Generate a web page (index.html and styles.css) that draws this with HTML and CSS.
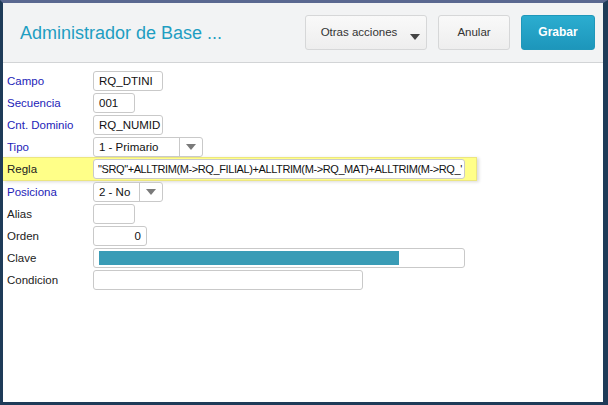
FILE: index.html
```html
<!DOCTYPE html>
<html lang="es">
<head>
    <meta charset="UTF-8">
    <meta name="viewport" content="width=device-width, initial-scale=1.0">
    <title>Administrador de Base</title>
    <link rel="stylesheet" href="styles.css">
</head>
<body>
    <div class="window">
        <header class="toolbar">
            <h1>Administrador de Base ...</h1>
            <div class="actions">
                <button class="btn btn-more">Otras acciones<span class="caret"></span></button>
                <button class="btn btn-cancel">Anular</button>
                <button class="btn btn-save">Grabar</button>
            </div>
        </header>
        <main class="form">
            <div class="row">
                <label class="req">Campo</label>
                <div class="field w70">RQ_DTINI</div>
            </div>
            <div class="row">
                <label class="req">Secuencia</label>
                <div class="field w42">001</div>
            </div>
            <div class="row">
                <label class="req">Cnt. Dominio</label>
                <div class="field w70">RQ_NUMID</div>
            </div>
            <div class="row">
                <label class="req">Tipo</label>
                <div class="select w110"><span class="value">1 - Primario</span><span class="arrow"></span></div>
            </div>
            <div class="row row-focus">
                <label>Regla</label>
                <div class="field w372 tight">"SRQ"+ALLTRIM(M-&gt;RQ_FILIAL)+ALLTRIM(M-&gt;RQ_MAT)+ALLTRIM(M-&gt;RQ_'</div>
            </div>
            <div class="row">
                <label class="req">Posiciona</label>
                <div class="select w70"><span class="value">2 - No</span><span class="arrow"></span></div>
            </div>
            <div class="row">
                <label>Alias</label>
                <div class="field w42"></div>
            </div>
            <div class="row">
                <label>Orden</label>
                <div class="field w54 num">0</div>
            </div>
            <div class="row">
                <label>Clave</label>
                <div class="field w372"><div class="bar"></div></div>
            </div>
            <div class="row">
                <label>Condicion</label>
                <div class="field w270"></div>
            </div>
        </main>
    </div>
</body>
</html>
```

FILE: styles.css
```css
html, body {
    margin: 0;
    padding: 0;
}
body {
    font-family: "Liberation Sans", Arial, sans-serif;
    background: #ffffff;
}
.window {
    width: 608px;
    height: 405px;
    box-sizing: border-box;
    border-top: 3px solid #5a6890;
    border-left: 3px solid #1e3b58;
    border-right: 5px solid #1e3b58;
    border-bottom: 3px solid #1e3b58;
    background: #ffffff;
    overflow: hidden;
}
.toolbar {
    height: 59px;
    background: #f2f3f4;
    border-bottom: 1px solid #d2d4d6;
    display: flex;
    align-items: center;
    justify-content: space-between;
    padding: 0 8px 0 17px;
}
.toolbar h1 {
    margin: 0;
    font-size: 18px;
    font-weight: normal;
    color: #1e9ec2;
    padding-top: 1px;
}
.actions {
    display: flex;
    gap: 11px;
    margin-top: -1px;
}
.btn {
    height: 35px;
    box-sizing: border-box;
    border: 1px solid #d6d7d8;
    border-radius: 3px;
    background: linear-gradient(#f9f9f9, #eeeeee);
    font-family: "Liberation Sans", Arial, sans-serif;
    font-size: 11.5px;
    color: #333333;
    padding: 0;
}
.btn-more {
    width: 122px;
    position: relative;
    padding-right: 14px;
}
.caret {
    position: absolute;
    right: 6px;
    bottom: 9px;
    width: 0;
    height: 0;
    border-left: 5px solid transparent;
    border-right: 5px solid transparent;
    border-top: 6px solid #444444;
}
.btn-cancel {
    width: 72px;
}
.btn-save {
    width: 74px;
    border-color: #1f97ba;
    background: linear-gradient(#2badd0, #1d96bb);
    color: #ffffff;
    font-weight: bold;
    font-size: 12px;
}
.form {
    padding-top: 7px;
}
.row {
    display: flex;
    align-items: center;
    height: 22px;
    padding-left: 4px;
}
.row label {
    width: 86px;
    font-size: 11.5px;
    color: #222222;
}
.row label.req {
    color: #2323b8;
}
.row-focus {
    height: 24px;
    width: 474px;
    background: #ffff88;
    border: 1px solid #ece680;
    border-left: none;
    box-sizing: border-box;
    box-shadow: 2px 1px 3px rgba(0, 0, 0, 0.15);
    margin-top: -1px;
}
.field, .select {
    height: 20px;
    box-sizing: border-box;
    border: 1px solid #c9c9c9;
    border-radius: 3px;
    background: #ffffff;
    font-size: 11.5px;
    color: #111111;
    line-height: 18px;
    padding: 0 5px;
    white-space: nowrap;
    overflow: hidden;
}
.tight {
    font-size: 11px;
    letter-spacing: -0.4px;
    padding: 0 4px;
}
.num {
    text-align: right;
}
.w42 { width: 42px; }
.w54 { width: 54px; }
.w70 { width: 70px; }
.w110 { width: 110px; }
.w270 { width: 270px; }
.w372 { width: 372px; }
.select {
    display: flex;
    padding: 0;
}
.select .value {
    flex: 1;
    padding-left: 5px;
    border-right: 1px solid #c9c9c9;
}
.select .arrow {
    width: 22px;
    position: relative;
}
.select .arrow::after {
    content: "";
    position: absolute;
    left: 6px;
    top: 6px;
    border-left: 5px solid transparent;
    border-right: 5px solid transparent;
    border-top: 6px solid #7a7a7a;
}
.bar {
    width: 300px;
    height: 14px;
    margin-top: 2px;
    background: #3a9cb6;
}
```
